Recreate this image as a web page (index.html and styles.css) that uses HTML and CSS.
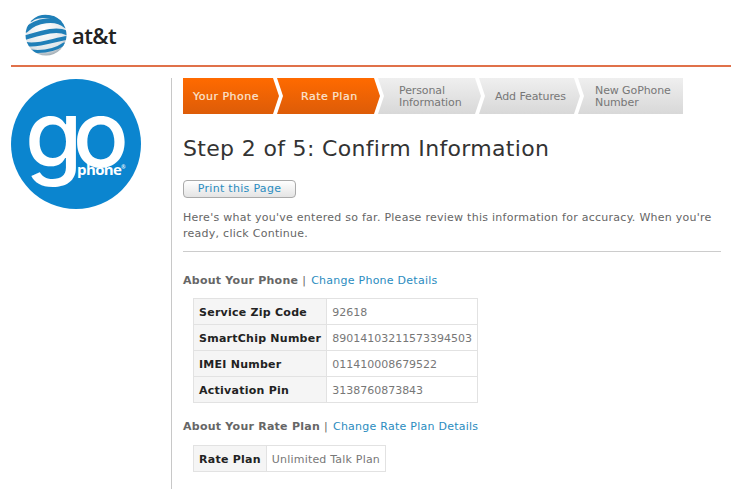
FILE: index.html
```html
<!DOCTYPE html>
<html lang="en">
<head>
  <meta charset="UTF-8">
  <title>Step 2 of 5: Confirm Information</title>
  <link rel="stylesheet" href="styles.css">
</head>
<body>
  <header class="top">
    <div class="att">
      <svg class="globe" width="44" height="42" viewBox="0 0 44 42">
        <defs>
          <radialGradient id="ball" cx="45%" cy="35%" r="70%">
            <stop offset="0" stop-color="#ffffff"/>
            <stop offset="0.75" stop-color="#dfe6ea"/>
            <stop offset="1" stop-color="#8d99a2"/>
          </radialGradient>
          <clipPath id="ballclip"><ellipse cx="22" cy="21" rx="20.5" ry="20.5"/></clipPath>
        </defs>
        <ellipse cx="22" cy="21" rx="20.5" ry="20.5" fill="url(#ball)"/>
        <g clip-path="url(#ballclip)" fill="none" stroke="#1f7fb8" stroke-linecap="round">
          <path d="M7 6 C14 1 30 1 37 7" stroke-width="3.5"/>
          <path d="M2 16 C12 6 32 3 42 12" stroke-width="5"/>
          <path d="M0 24 C14 20 32 13 43 19" stroke-width="4.5"/>
          <path d="M2 30 C14 33 32 25 43 24" stroke-width="4"/>
          <path d="M6 37 C16 38 30 37 40 30" stroke-width="3"/>
        </g>
      </svg>
      <span class="att-name">at&amp;t</span>
    </div>
  </header>

  <div class="page">
    <aside class="side">
      <div class="go-logo">
        <span class="go-word">go</span>
        <span class="go-phone">phone<sup>®</sup></span>
      </div>
    </aside>

    <main class="main">
      <ol class="steps">
        <li class="step step-first done"><span>Your Phone</span></li>
        <li class="step step-rate done"><span>Rate Plan</span></li>
        <li class="step"><span>Personal<br>Information</span></li>
        <li class="step step-add"><span>Add Features</span></li>
        <li class="step step-last"><span>New GoPhone<br>Number</span></li>
      </ol>

      <h1>Step 2 of 5: Confirm Information</h1>

      <button class="print" type="button">Print this Page</button>

      <p class="intro">Here's what you've entered so far. Please review this information for accuracy. When you're ready, click Continue.</p>

      <h2><b>About Your Phone</b><span class="sep">|</span><a href="#">Change Phone Details</a></h2>
      <table class="info">
        <tr><th>Service Zip Code</th><td class="num">92618</td></tr>
        <tr><th>SmartChip Number</th><td class="num">89014103211573394503</td></tr>
        <tr><th>IMEI Number</th><td class="num">011410008679522</td></tr>
        <tr><th>Activation Pin</th><td class="num">3138760873843</td></tr>
      </table>

      <h2 class="second"><b>About Your Rate Plan</b><span class="sep">|</span><a href="#">Change Rate Plan Details</a></h2>
      <table class="info info-plan">
        <tr><th>Rate Plan</th><td>Unlimited Talk Plan</td></tr>
      </table>
    </main>
  </div>
</body>
</html>
```

FILE: styles.css
```css
html, body {
  height: 100%;
}

body {
  margin: 0;
  background: #fff;
  color: #666;
  font-family: "DejaVu Sans", Verdana, sans-serif;
  font-size: 11px;
  overflow: hidden;
}

.top {
  height: 65px;
  margin-left: 11px;
  border-bottom: 2px solid #e0714a;
  box-sizing: content-box;
}

.att {
  display: flex;
  align-items: center;
  gap: 4px;
  padding: 14px 0 0 13px;
}

.att-name {
  font-family: "Open Sans", sans-serif;
  font-size: 22px;
  font-weight: 600;
  color: #222;
  letter-spacing: -0.6px;
  line-height: 40px;
}

.page {
  display: flex;
  padding: 11px 0 0 11px;
}

.side {
  width: 160px;
  flex: none;
  padding-top: 1px;
}

.go-logo {
  position: relative;
  width: 130px;
  height: 130px;
  border-radius: 50%;
  background: #0b85cf;
  color: #fff;
}

.go-word {
  position: absolute;
  left: 14px;
  top: -1px;
  font-family: Inter, sans-serif;
  font-weight: 500;
  font-size: 93px;
  line-height: 110px;
  letter-spacing: -10px;
}

.go-phone {
  position: absolute;
  left: 66px;
  top: 80px;
  font-family: "Open Sans", sans-serif;
  font-weight: 700;
  font-size: 15px;
  letter-spacing: -0.6px;
}

.go-phone sup {
  font-size: 5px;
}

.main {
  flex: 1;
  border-left: 1px solid #c8c8c8;
  padding: 0 10px 0 11px;
  min-height: 420px;
}

.steps {
  display: flex;
  list-style: none;
  margin: 0;
  padding: 0;
  height: 36px;
}

.step {
  display: flex;
  align-items: center;
  width: 103px;
  margin-left: -2px;
  padding: 1px 0 0 21px;
  box-sizing: border-box;
  background: linear-gradient(to bottom, #efefef, #d8d8d8);
  color: #777;
  line-height: 12px;
  letter-spacing: -0.1px;
  clip-path: polygon(0 0, calc(100% - 6px) 0, 100% 50%, calc(100% - 6px) 100%, 0 100%, 6px 50%);
}

.step-first {
  width: 96px;
  margin-left: 0;
  padding-left: 10px;
  clip-path: polygon(0 0, 90px 0, 100% 50%, 90px 100%, 0 100%);
}

.step-rate {
  padding-left: 24px;
}

.step-add {
  width: 101px;
  padding-left: 16px;
}

.step-last {
  width: 105px;
  padding-left: 17px;
  clip-path: polygon(0 0, 100% 0, 100% 100%, 0 100%, 6px 50%);
}

.done {
  background: linear-gradient(to bottom, #ff6a00, #dd5c08);
  color: #fbe6d3;
  letter-spacing: 0.5px;
  -webkit-text-stroke: 0.2px #fbe6d3;
}

h1 {
  margin: 21px 0 0;
  font-size: 22px;
  font-weight: 400;
  line-height: 28px;
  color: #333;
  letter-spacing: 0.33px;
}

.print {
  display: block;
  margin-top: 17px;
  width: 113px;
  height: 18px;
  padding: 0 0 2px;
  border: 1px solid #aaa;
  border-radius: 4px;
  background: linear-gradient(to bottom, #fff, #e4e4e4);
  color: #2a8cc0;
  font: inherit;
  letter-spacing: 0.3px;
}

.intro {
  margin: 12px 0 0;
  padding-bottom: 9px;
  border-bottom: 1px solid #ccc;
  line-height: 16px;
  letter-spacing: 0.26px;
}

h2 {
  margin: 21px 0 0;
  font-size: 11px;
  font-weight: 400;
  line-height: 15px;
  letter-spacing: 0.25px;
}

h2.second {
  margin-top: 16px;
}

.sep {
  margin: 0 5px 0 4px;
}

h2 a {
  color: #2a8cc0;
  text-decoration: none;
}

.info {
  margin: 10px 0 0 10px;
  border-collapse: collapse;
}

.info-plan {
  margin-top: 11px;
}

.info th,
.info td {
  height: 24px;
  padding: 1px 5px 0;
  border: 1px solid #e2e2e2;
  text-align: left;
  white-space: nowrap;
}

.info th {
  background: #f5f5f5;
  color: #222;
  letter-spacing: 0.25px;
}

.info td {
  color: #777;
  letter-spacing: 0.2px;
}

.info td.num {
  letter-spacing: 0;
}
```
